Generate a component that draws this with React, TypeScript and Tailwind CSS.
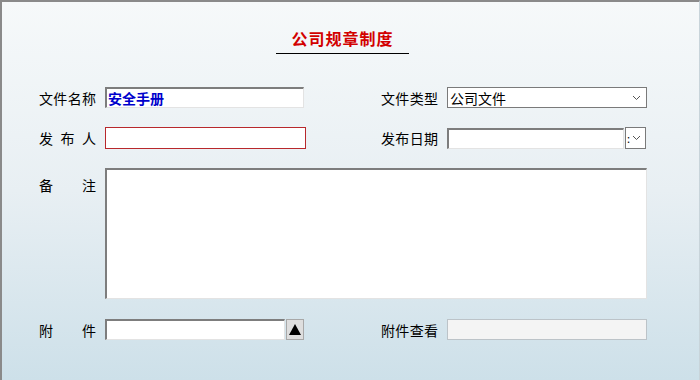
import React from "react";

const font = { fontFamily: '"Noto Sans CJK SC", "Noto Sans", sans-serif' };

function Label({ chars }: { chars: string[] }) {
  return (
    <div className="flex w-[57px] shrink-0 justify-between text-[14px] leading-none text-black">
      {chars.map((c, i) => (
        <span key={i}>{c}</span>
      ))}
    </div>
  );
}

const inset =
  "bg-white border-t-2 border-l-2 border-b border-r border-t-[#7d7d7d] border-l-[#7d7d7d] border-b-[#e3e3e3] border-r-[#e3e3e3]";

export default function App() {
  return (
    <div
      style={font}
      className="relative h-[380px] w-[700px] overflow-hidden border-t-2 border-l-2 border-r border-t-[#8a8a8a] border-l-[#8a8a8a] border-r-[#c8d4da] bg-gradient-to-b from-[#f6f9fa] via-[#e8eff3] to-[#cde0e9]"
    >
      <div className="flex flex-col items-center pt-[26px] pr-[16px]">
        <div className="text-[16px] font-bold leading-[20px] tracking-[1px] text-[#d20000]">
          公司规章制度
        </div>
        <div className="mt-[5px] h-px w-[133px] bg-black" />
      </div>

      {/* Row 1 */}
      <div className="mt-[33px] flex items-center pl-[37px]">
        <div className="flex w-[342px] items-center">
          <Label chars={["文", "件", "名", "称"]} />
          <div className={`ml-[9px] flex h-[21px] w-[199px] items-center pl-[1px] ${inset}`}>
            <span className="text-[14px] font-bold leading-none text-[#0000cc]">安全手册</span>
          </div>
        </div>
        <div className="flex items-center">
          <Label chars={["文", "件", "类", "型"]} />
          <div className="ml-[9px] flex h-[21px] w-[200px] items-center justify-between border border-[#7a7a7a] bg-white pl-[2px] pr-[5px]">
            <span className="text-[14px] leading-none text-black">公司文件</span>
            <svg width="9" height="6" viewBox="0 0 9 6">
              <path d="M1 1 L4.5 4.5 L8 1" stroke="#555" strokeWidth="1" fill="none" />
            </svg>
          </div>
        </div>
      </div>

      {/* Row 2 */}
      <div className="mt-[19px] flex items-center pl-[37px]">
        <div className="flex w-[342px] items-center">
          <Label chars={["发", "布", "人"]} />
          <div className="ml-[9px] h-[22px] w-[201px] border border-[#b8282c] bg-white" />
        </div>
        <div className="flex items-center">
          <Label chars={["发", "布", "日", "期"]} />
          <div className={`ml-[9px] h-[21px] w-[177px] ${inset}`} />
          <div className="ml-[1px] flex h-[22px] w-[21px] items-center border border-[#7a7a7a] bg-white">
            <span className="ml-[1px] text-[11px] leading-none text-black">:</span>
            <svg className="ml-[2px]" width="9" height="6" viewBox="0 0 9 6">
              <path d="M1 1 L4.5 4.5 L8 1" stroke="#555" strokeWidth="1" fill="none" />
            </svg>
          </div>
        </div>
      </div>

      {/* Row 3 */}
      <div className="mt-[19px] flex items-start pl-[37px]">
        <div className="pt-[10px]">
          <Label chars={["备", "注"]} />
        </div>
        <div className={`ml-[9px] h-[131px] w-[542px] ${inset}`} />
      </div>

      {/* Row 4 */}
      <div className="mt-[20px] flex items-center pl-[37px]">
        <div className="flex w-[342px] items-center">
          <Label chars={["附", "件"]} />
          <div className={`ml-[9px] h-[21px] w-[180px] ${inset}`} />
          <div className="ml-[1px] flex h-[21px] w-[18px] items-center justify-center border border-[#a8a8a8] bg-[#dedede]">
            <svg width="12" height="11" viewBox="0 0 12 11">
              <path d="M6 0 L12 11 L0 11 Z" fill="#000" />
            </svg>
          </div>
        </div>
        <div className="flex items-center">
          <Label chars={["附", "件", "查", "看"]} />
          <div className="ml-[9px] h-[21px] w-[200px] border border-[#bcc3c8] bg-[#f4f4f4]" />
        </div>
      </div>
    </div>
  );
}
